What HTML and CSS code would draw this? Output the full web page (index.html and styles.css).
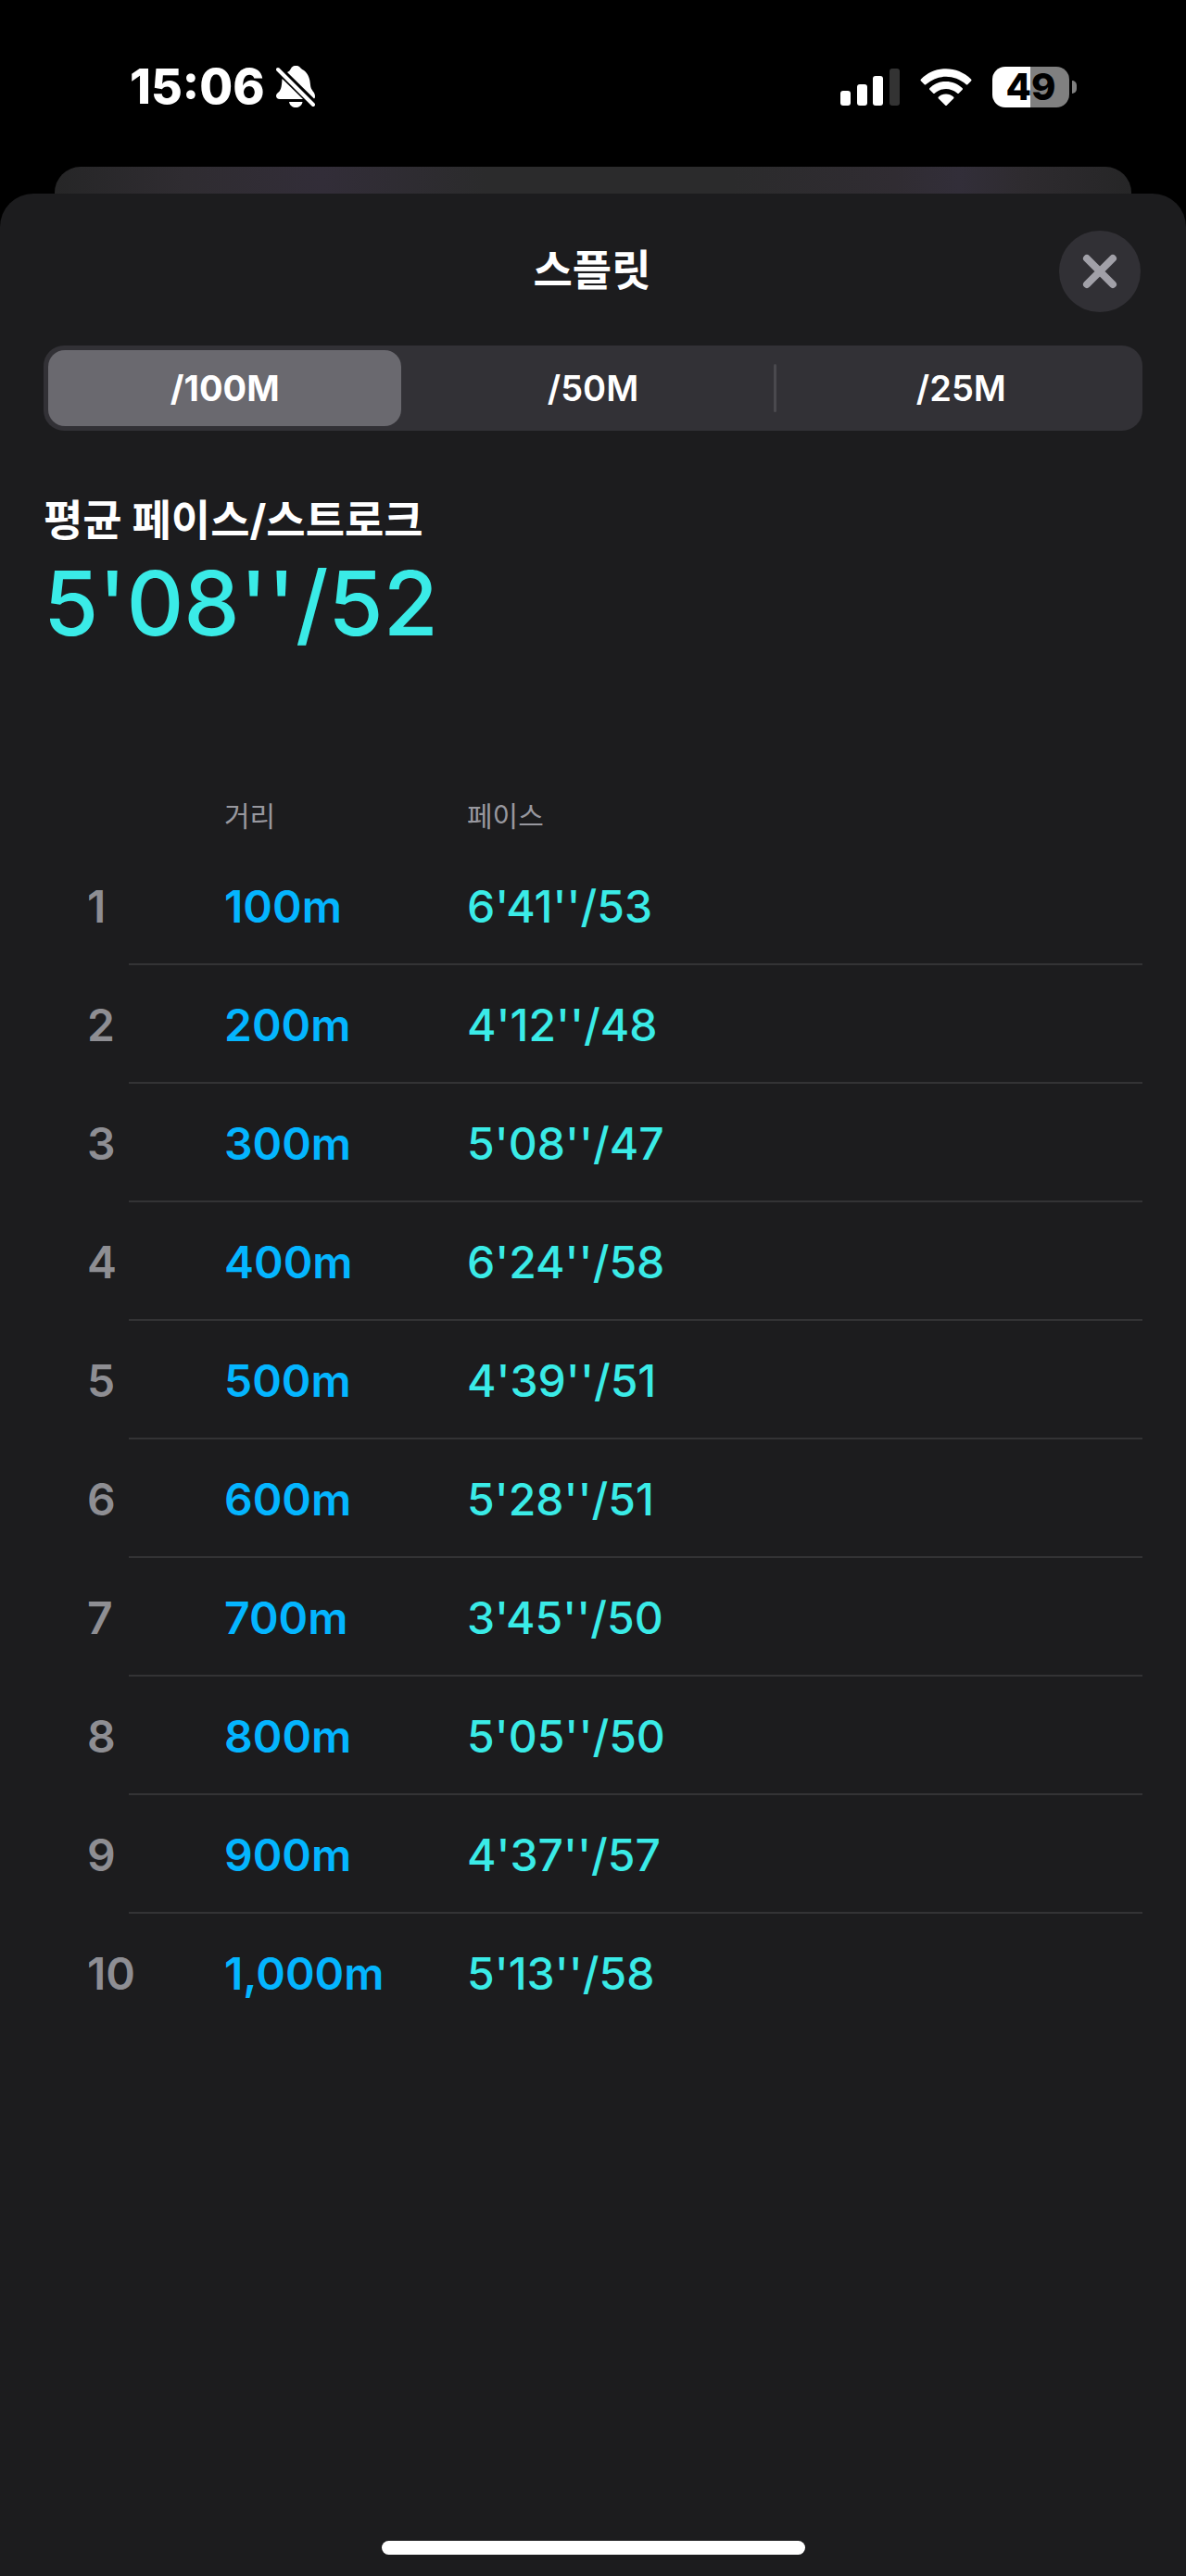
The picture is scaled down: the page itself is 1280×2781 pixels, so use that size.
FILE: index.html
```html
<!DOCTYPE html>
<html lang="ko">
<head>
    <meta charset="UTF-8">
    <meta name="viewport" content="width=device-width, initial-scale=1.0">
    <title>스플릿</title>
    <link rel="stylesheet" href="styles.css">
</head>
<body>
    <!-- Status bar -->
    <div class="status-bar">
        <div class="status-left">
            <span class="clock">15:06</span>
            <svg class="bell" viewBox="0 0 42 46" width="42" height="46" aria-hidden="true">
                <path fill="#fff" d="M12 7C14 6 15 5 16 3C18-1 24-1 26 2C27 3 28 4 30 5C35 9 36.500 14 37 21C37.500 27 42 28 42 33Q42 35 41 35.500ZM6.500 14L29 36H4C0 36 -1 32 1 30C5 27 6 24 6.500 14ZM14 39H28.500C27 47 15.500 47 14 39Z"/>
                <path fill="none" stroke="#fff" stroke-width="4" stroke-linecap="round" d="M2 4L40 42"/>
            </svg>
        </div>
        <div class="status-right">
            <svg viewBox="0 0 64 40" width="64" height="40" aria-hidden="true">
                <rect x="0" y="24" width="11" height="16" rx="3" fill="#fff"/>
                <rect x="18" y="17" width="11" height="23" rx="3" fill="#fff"/>
                <rect x="35" y="8" width="11" height="32" rx="3" fill="#fff"/>
                <rect x="53" y="0" width="11" height="40" rx="3" fill="#333"/>
            </svg>
            <svg viewBox="0 0 56 40" width="56" height="40" aria-hidden="true">
                <path fill="#fff" d="M1 11.500C16-3.500 40-3.500 55 11.500Q56 12.500 55 13.500L51.500 17Q50.500 18 49.500 17C37 6 19 6 6.500 17Q5.500 18 4.500 17L1 13.500Q0 12.500 1 11.500Z"/>
                <path fill="#fff" d="M10.500 21C20 11.500 36 11.500 45.500 21Q46.500 22 45.500 23L42 26.500Q41 27.500 40 26.500C33 20.500 23 20.500 16 26.500Q15 27.500 14 26.500L10.500 23Q9.500 22 10.500 21Z"/>
                <path fill="#fff" d="M20 30.500C24.500 26.500 31.500 26.500 36 30.500Q37 31.500 36 32.500L29 39.500Q28 40.500 27 39.500L20 32.500Q19 31.500 20 30.500Z"/>
            </svg>
            <div class="battery">
                <span class="battery-level">49</span>
                <span class="battery-tip"></span>
            </div>
        </div>
    </div>

    <div class="back-card"></div>

    <main class="sheet">
        <header class="sheet-header">
            <h1>스플릿</h1>
            <button class="close" aria-label="닫기">
                <svg viewBox="0 0 38 38" width="38" height="38" aria-hidden="true">
                    <path fill="none" stroke="#a1a0a8" stroke-width="8" stroke-linecap="round" d="M5 5L33 33M33 5L5 33"/>
                </svg>
            </button>
        </header>

        <div class="segments">
            <button class="segment selected" aria-pressed="true">/100M</button>
            <button class="segment" aria-pressed="false">/50M</button>
            <button class="segment divided" aria-pressed="false">/25M</button>
        </div>

        <section class="average">
            <h2>평균 페이스/스트로크</h2>
            <p>5'08''/52</p>
        </section>

        <table class="splits">
            <thead>
                <tr>
                    <td class="number"></td>
                    <th class="distance" scope="col">거리</th>
                    <th scope="col">페이스</th>
                </tr>
            </thead>
            <tbody>
                <tr>
                    <td class="number">1</td>
                    <td class="distance">100m</td>
                    <td class="pace">6'41''/53</td>
                </tr>
                <tr>
                    <td class="number">2</td>
                    <td class="distance">200m</td>
                    <td class="pace">4'12''/48</td>
                </tr>
                <tr>
                    <td class="number">3</td>
                    <td class="distance">300m</td>
                    <td class="pace">5'08''/47</td>
                </tr>
                <tr>
                    <td class="number">4</td>
                    <td class="distance">400m</td>
                    <td class="pace">6'24''/58</td>
                </tr>
                <tr>
                    <td class="number">5</td>
                    <td class="distance">500m</td>
                    <td class="pace">4'39''/51</td>
                </tr>
                <tr>
                    <td class="number">6</td>
                    <td class="distance">600m</td>
                    <td class="pace">5'28''/51</td>
                </tr>
                <tr>
                    <td class="number">7</td>
                    <td class="distance">700m</td>
                    <td class="pace">3'45''/50</td>
                </tr>
                <tr>
                    <td class="number">8</td>
                    <td class="distance">800m</td>
                    <td class="pace">5'05''/50</td>
                </tr>
                <tr>
                    <td class="number">9</td>
                    <td class="distance">900m</td>
                    <td class="pace">4'37''/57</td>
                </tr>
                <tr>
                    <td class="number">10</td>
                    <td class="distance">1,000m</td>
                    <td class="pace">5'13''/58</td>
                </tr>
            </tbody>
        </table>

        <div class="home-indicator"></div>
    </main>
</body>
</html>
```
FILE: styles.css
```css
/* General Reset */
* {
    margin: 0;
    padding: 0;
    box-sizing: border-box;
}

body {
    font-family: "Inter", "Noto Sans CJK KR", sans-serif;
    background: #000;
    color: #fff;
    display: flex;
    flex-direction: column;
    min-height: 100vh;
}

button {
    font-family: inherit;
    color: inherit;
    border: none;
    cursor: pointer;
}

/* Status bar */
.status-bar {
    display: flex;
    justify-content: space-between;
    height: 180px;
    padding: 64px 118px 0 140px;
}

.status-left,
.status-right {
    display: flex;
    align-items: center;
    height: 60px;
}

.status-left {
    gap: 12px;
}

.status-right {
    gap: 22px;
}

.clock {
    font-size: 52px;
    font-weight: 800;
    line-height: 60px;
}

.battery {
    display: flex;
    align-items: center;
    gap: 3px;
}

.battery-level {
    width: 83px;
    height: 44px;
    border-radius: 14px;
    background: linear-gradient(to right, #fff 49%, #808080 49%);
    color: #000;
    font-size: 40px;
    font-weight: 800;
    line-height: 44px;
    text-align: center;
}

.battery-tip {
    width: 5px;
    height: 14px;
    border-radius: 0 7px 7px 0;
    background: #808080;
}

/* Card behind the sheet */
.back-card {
    height: 60px;
    margin: 0 59px -31px;
    border-radius: 28px 28px 0 0;
    background: linear-gradient(to right, #262627 0%, #2f2c31 12%, #322d38 25%, #2b2b2c 40%, #2b2b2c 63%, #302c32 78%, #322e39 84%, #2e2b2f 90%, #262627 100%);
}

.sheet {
    flex: 1;
    display: flex;
    flex-direction: column;
    padding: 40px 47px 23px;
    border-radius: 36px 36px 0 0;
    background: #1c1c1e;
}

.sheet-header {
    display: grid;
    grid-template-columns: 88px 1fr 88px;
    align-items: center;
    height: 88px;
    margin-right: 2px;
}

.sheet-header h1 {
    grid-column: 2;
    padding-bottom: 4px;
    font-size: 46px;
    font-weight: 700;
    line-height: 60px;
    text-align: center;
}

.close {
    display: flex;
    justify-content: center;
    align-items: center;
    width: 88px;
    height: 88px;
    border-radius: 50%;
    background: #313035;
}

/* Distance picker */
.segments {
    display: grid;
    grid-template-columns: repeat(3, 1fr);
    gap: 16px;
    margin-top: 36px;
    padding: 5px;
    border-radius: 22px;
    background: #323136;
}

.segment {
    position: relative;
    height: 82px;
    border-radius: 18px;
    background: none;
    font-size: 38px;
    font-weight: 600;
}

.segment.selected {
    background: #6a696f;
    font-weight: 700;
}

.segment.divided::before {
    content: "";
    position: absolute;
    top: 15px;
    left: -12px;
    width: 3px;
    height: 52px;
    border-radius: 2px;
    background: #4a494e;
}

.average {
    margin-top: 66px;
}

.average h2 {
    font-size: 46px;
    font-weight: 700;
    line-height: 60px;
}

.average p {
    font-size: 96px;
    font-weight: 500;
    line-height: 120px;
    color: #3aebe7;
}

/* Splits table */
.splits {
    width: 100%;
    margin-top: 137px;
    border-collapse: collapse;
    table-layout: fixed;
    text-align: left;
    font-size: 48px;
    font-weight: 600;
}

.splits th {
    height: 66px;
    padding-bottom: 4px;
    color: #98989f;
    font-size: 30px;
    font-weight: 400;
}

.splits tbody tr {
    height: 128px;
}

.splits tbody tr:not(:last-child) {
    background: linear-gradient(#333335, #333335) right bottom / calc(100% - 92px) 2px no-repeat;
}

.number {
    width: 195px;
    padding-left: 47px;
    color: #8e8e93;
}

.distance {
    width: 262px;
}

td.distance {
    color: #04b5ff;
}

.pace {
    color: #3aebe7;
    font-weight: 500;
}

.home-indicator {
    width: 457px;
    height: 15px;
    margin: auto auto 0;
    border-radius: 8px;
    background: #fff;
}
```
